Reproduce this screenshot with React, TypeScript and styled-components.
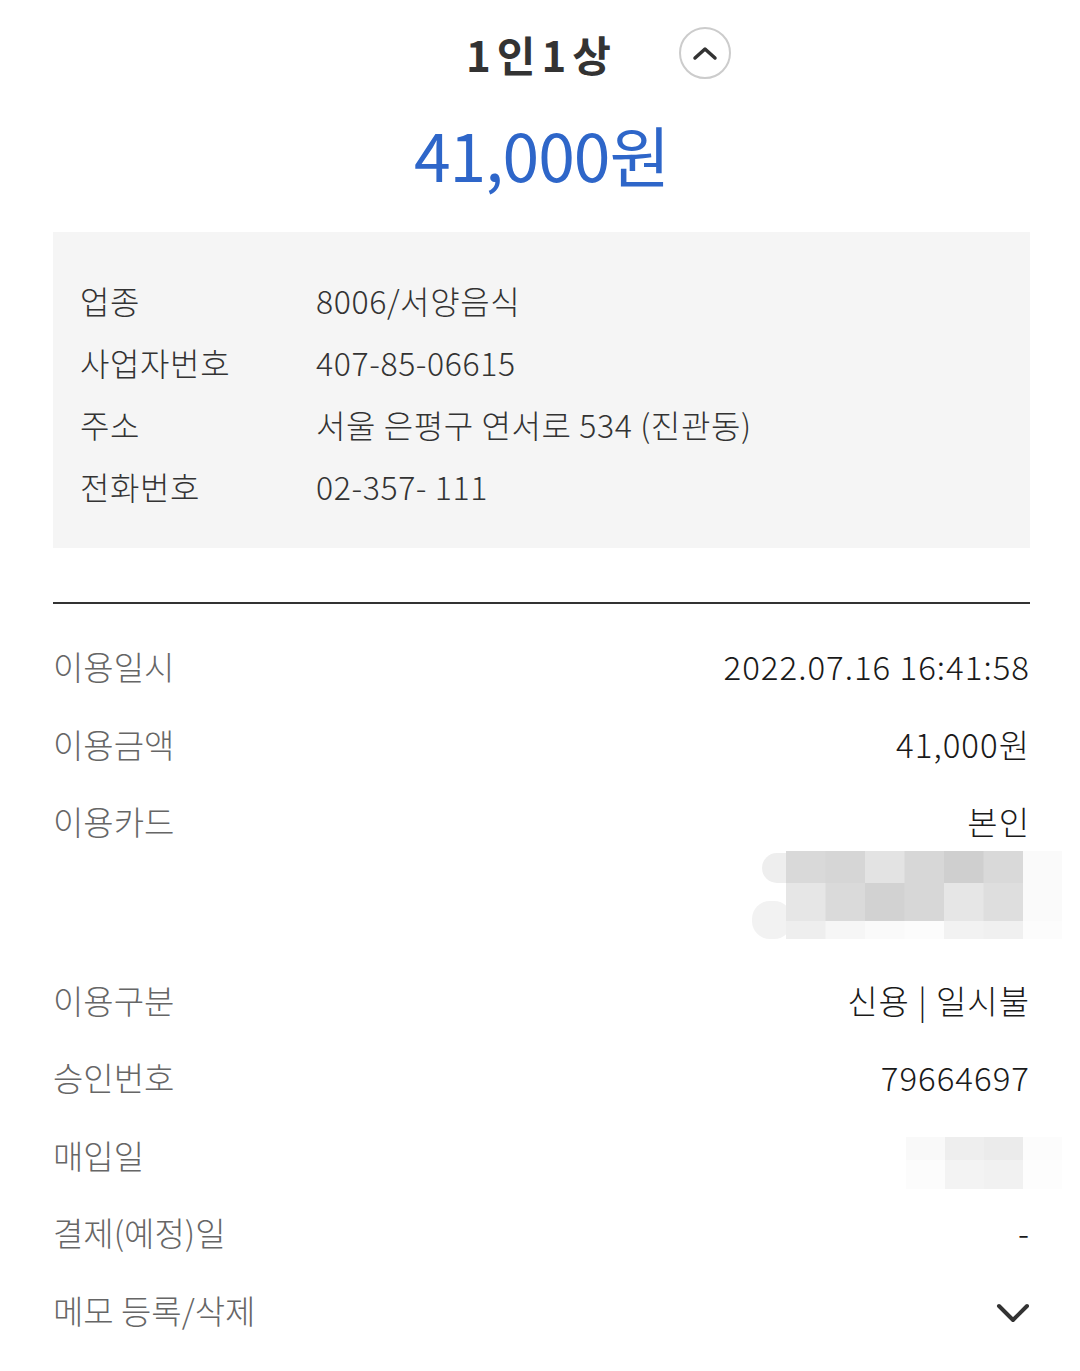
import React from 'react';

import styled, { createGlobalStyle } from 'styled-components';

const GlobalStyle = createGlobalStyle`
  html, body {
    margin: 0;
    padding: 0;
    background-color: #ffffff;
  }

  body {
    font-family: 'Noto Sans CJK KR', 'Noto Sans', sans-serif;
    color: #222222;
  }
`;

const Page = styled.div`
  width: 1080px;
  box-sizing: border-box;
  padding: 0px 50px 20px 53px;
`;

const Header = styled.div`
  height: 106px;
  display: grid;
  grid-template-columns: 1fr auto 1fr;
  align-items: center;
`;

const Title = styled.h1`
  grid-column: 2;
  margin: 0px;
  font-size: 42px;
  font-weight: 700;
  letter-spacing: 6px;
  color: #333333;
`;

const ToggleButton = styled.button`
  grid-column: 3;
  justify-self: start;
  margin-left: 62px;
  width: 52px;
  height: 52px;
  border-radius: 50%;
  border: 2px solid #cccccc;
  background-color: #ffffff;
  display: flex;
  justify-content: center;
  align-items: center;
  padding: 0px;
`;

const Price = styled.div`
  text-align: center;
  font-size: 66px;
  font-weight: 400;
  color: #2e66c9;
  line-height: 94px;
  letter-spacing: -1px;
`;

const StoreBox = styled.div`
  margin-top: 32px;
  background-color: #f5f5f5;
  padding: 37px 27px 31px 27px;
  display: grid;
  grid-template-columns: 236px 1fr;
  grid-auto-rows: 62px;
  align-items: center;
  font-size: 32px;
  font-weight: 300;
  letter-spacing: 0.6px;
  color: #333333;
`;

const Divider = styled.div`
  margin-top: 54px;
  height: 2px;
  background-color: #333333;
`;

const DetailList = styled.div`
  padding-top: 24px;
  display: flex;
  flex-direction: column;
`;

const DetailRow = styled.div`
  display: flex;
  justify-content: space-between;
  align-items: flex-start;
  min-height: 77.5px;
`;

const Label = styled.div`
  font-size: 33px;
  font-weight: 300;
  line-height: 77.5px;
  color: #666666;
`;

const Value = styled.div`
  display: flex;
  flex-direction: column;
  align-items: flex-end;
  font-size: 33px;
  font-weight: 300;
  line-height: 77.5px;
  letter-spacing: 1px;
  color: #1a1a1a;
`;

const Blur = styled.svg<{ $top?: number; $bottom?: number }>`
  display: block;
  margin-right: -32px;
  margin-top: ${(p) => p.$top || 0}px;
  margin-bottom: ${(p) => p.$bottom || 0}px;
`;

const ChevronBox = styled.div`
  height: 77.5px;
  display: flex;
  align-items: center;
  padding-top: 3px;
`;

const cardBlocks = [
  ['#d9d9d9', '#d6d6d6', '#e3e3e3', '#d7d7d7', '#cfcfcf', '#d9d9d9', '#fafafa'],
  ['#e6e6e6', '#dadada', '#d2d2d2', '#d7d7d7', '#e6e6e6', '#dedede', '#fafafa'],
  ['#eeeeee', '#f6f6f6', '#fafafa', '#fcfcfc', '#f2f2f2', '#f0f0f0', '#fcfcfc'],
];

const buyBlocks = [
  ['#f9f9f9', '#eeeeee', '#ebebeb', '#fcfcfc'],
  ['#fcfcfc', '#f3f3f3', '#f1f1f1', '#fdfdfd'],
];

function CardBlur() {
  const heights = [32, 38, 18];
  const tops = [0, 32, 70];

  return (
    <Blur width="310" height="92" viewBox="0 0 310 92" $top={-10} $bottom={19}>
      <rect x="10" y="2" width="40" height="30" rx="15" fill="#eeeeee" />
      <rect x="0" y="50" width="40" height="38" rx="18" fill="#f2f2f2" />
      {cardBlocks.map((row, r) =>
        row.map((color, c) => (
          <rect
            key={`${r}-${c}`}
            x={34 + c * 39.5}
            y={tops[r]}
            width="40"
            height={heights[r]}
            fill={color}
          />
        ))
      )}
    </Blur>
  );
}

function BuyBlur() {
  return (
    <Blur width="156" height="52" viewBox="0 0 156 52" $top={20}>
      {buyBlocks.map((row, r) =>
        row.map((color, c) => (
          <rect
            key={`${r}-${c}`}
            x={c * 39}
            y={r * 23}
            width="39.5"
            height={r === 0 ? 23 : 29}
            fill={color}
          />
        ))
      )}
    </Blur>
  );
}

const storeInfo = [
  ['업종', '8006/서양음식'],
  ['사업자번호', '407-85-06615'],
  ['주소', '서울 은평구 연서로 534 (진관동)'],
  ['전화번호', '02-357- 111'],
];

export default function App() {
  return (
    <Page>
      <GlobalStyle />
      <Header>
        <Title>1인1상</Title>
        <ToggleButton>
          <svg width="26" height="16" viewBox="0 0 26 16">
            <path
              d="M3 13 L13 4 L23 13"
              fill="none"
              stroke="#333333"
              strokeWidth="3.5"
              strokeLinecap="round"
              strokeLinejoin="round"
            />
          </svg>
        </ToggleButton>
      </Header>

      <Price>41,000원</Price>

      <StoreBox>
        {storeInfo.map(([label, value]) => (
          <React.Fragment key={label}>
            <div>{label}</div>
            <div>{value}</div>
          </React.Fragment>
        ))}
      </StoreBox>

      <Divider />

      <DetailList>
        <DetailRow>
          <Label>이용일시</Label>
          <Value>2022.07.16 16:41:58</Value>
        </DetailRow>
        <DetailRow>
          <Label>이용금액</Label>
          <Value>41,000원</Value>
        </DetailRow>
        <DetailRow>
          <Label>이용카드</Label>
          <Value>
            본인
            <CardBlur />
          </Value>
        </DetailRow>
        <DetailRow>
          <Label>이용구분</Label>
          <Value>신용 | 일시불</Value>
        </DetailRow>
        <DetailRow>
          <Label>승인번호</Label>
          <Value>79664697</Value>
        </DetailRow>
        <DetailRow>
          <Label>매입일</Label>
          <Value>
            <BuyBlur />
          </Value>
        </DetailRow>
        <DetailRow>
          <Label>결제(예정)일</Label>
          <Value>-</Value>
        </DetailRow>
        <DetailRow>
          <Label>메모 등록/삭제</Label>
          <ChevronBox>
            <svg width="34" height="22" viewBox="0 0 34 22">
              <path
                d="M3 4 L17 18 L31 4"
                fill="none"
                stroke="#333333"
                strokeWidth="4"
                strokeLinecap="round"
                strokeLinejoin="round"
              />
            </svg>
          </ChevronBox>
        </DetailRow>
      </DetailList>
    </Page>
  );
}
